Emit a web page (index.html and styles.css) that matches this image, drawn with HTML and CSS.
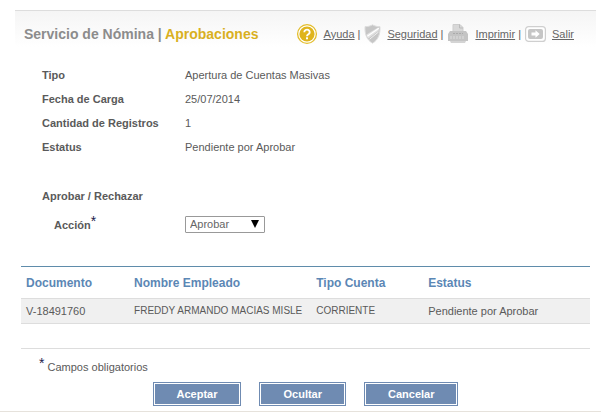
FILE: index.html
```html
<!DOCTYPE html>
<html lang="es">
<head>
    <meta charset="UTF-8">
    <title>Servicio de Nómina | Aprobaciones</title>
    <meta name="viewport" content="width=device-width, initial-scale=1">
    <link rel="stylesheet" href="styles.css">
</head>
<body>
    <div class="page">
        <div class="header">
            <h1>Servicio de Nómina | <span class="current">Aprobaciones</span></h1>
            <ul class="tools">
                <li class="tool">
                    <svg class="icon" width="22" height="22" viewBox="0 0 22 22">
                        <circle cx="11" cy="11" r="9.4" fill="#fff" stroke="#e3bd2c" stroke-width="1.3"/>
                        <circle cx="11" cy="11" r="7.6" fill="#dfb41c"/>
                        <path d="M8.3 9.2a2.7 2.5 0 1 1 4.2 2c-1 .7-1.5 1-1.5 2" fill="none" stroke="#fff" stroke-width="1.9"/>
                        <rect x="10" y="14.3" width="2" height="2" fill="#fff"/>
                    </svg>
                    <a href="#">Ayuda</a><span class="sep">|</span>
                </li>
                <li class="tool">
                    <svg class="icon" width="17" height="20" viewBox="0 0 17 20">
                        <path d="M8.5 0.8C6.5 2 4 2.8 1 2.6c-.3 7 1.3 13 7.5 16.6C14.7 15.6 16.3 9.6 16 2.6c-3 .2-5.500-.6-7.500-1.800z" fill="#c6c6c6" stroke="#dedede"/>
                        <path d="M2.5 10.5L14 3.6l1 .2-.4 3L4.3 14.5z" fill="#e2e2e2"/>
                        <path d="M3.3 12.3L14.8 4.2" stroke="#fff" stroke-width="1.200"/>
                        <path d="M5.5 15.3L14.5 8" stroke="#eee"/>
                    </svg>
                    <a href="#">Seguridad</a><span class="sep">|</span>
                </li>
                <li class="tool">
                    <svg class="icon" width="22" height="22" viewBox="0 0 22 22">
                        <path d="M6 9V1.5h7l3 3V9z" fill="#d8d8d8" stroke="#cdcdcd"/>
                        <path d="M12.5 1.5V5H16" fill="none" stroke="#bbb"/>
                        <path d="M3 8h16l2 3v7H1v-7z" fill="#c4c4c4"/>
                        <path d="M6 10.500h10" stroke="#aaa" stroke-dasharray="2 1"/>
                        <path d="M4 13v3M7 13v3M10 13v3M13 13v3M16 13v3" stroke="#dedede"/>
                        <path d="M3 18h16l-1 2H4z" fill="#d4d4d4"/>
                    </svg>
                    <a href="#">Imprimir</a><span class="sep">|</span>
                </li>
                <li class="tool">
                    <svg class="icon" width="21" height="16" viewBox="0 0 21 16">
                        <rect x="0.6" y="0.6" width="19.8" height="14.8" rx="3" fill="#fff" stroke="#cfcfcf" stroke-width="1.2"/>
                        <rect x="3" y="3" width="15" height="10" rx="2" fill="#c6c6c6"/>
                        <path d="M6.500 6.500h4V4.300L14.700 8l-4.200 3.700V9.500h-4z" fill="#fff"/>
                    </svg>
                    <a href="#">Salir</a>
                </li>
            </ul>
        </div>

        <form class="content">
            <dl class="details">
                <dt>Tipo</dt><dd>Apertura de Cuentas Masivas</dd>
                <dt>Fecha de Carga</dt><dd>25/07/2014</dd>
                <dt>Cantidad de Registros</dt><dd>1</dd>
                <dt>Estatus</dt><dd>Pendiente por Aprobar</dd>
            </dl>

            <h2>Aprobar / Rechazar</h2>
            <div class="field">
                <label for="accion">Acción<span class="required">*</span></label>
                <div class="select">
                    <select id="accion" name="accion">
                        <option>Aprobar</option>
                        <option>Rechazar</option>
                    </select>
                    <svg class="arrow" width="8" height="8" viewBox="0 0 8 8"><path d="M0 0h8L4 8z"/></svg>
                </div>
            </div>

            <table class="employees">
                <thead>
                    <tr>
                        <th class="col-doc">Documento</th>
                        <th class="col-name">Nombre Empleado</th>
                        <th class="col-type">Tipo Cuenta</th>
                        <th>Estatus</th>
                    </tr>
                </thead>
                <tbody>
                    <tr>
                        <td>V-18491760</td>
                        <td class="caps">FREDDY ARMANDO MACIAS MISLE</td>
                        <td class="caps">CORRIENTE</td>
                        <td>Pendiente por Aprobar</td>
                    </tr>
                </tbody>
            </table>

            <p class="note"><span class="required">*</span> Campos obligatorios</p>

            <div class="buttons">
                <button type="submit">Aceptar</button>
                <button type="button">Ocultar</button>
                <button type="button">Cancelar</button>
            </div>
        </form>
    </div>
</body>
</html>
```
FILE: styles.css
```css
:root {
    --text: #5a5a5a;
    --blue: #5b87b5;
    --button: #6f8bb2;
    --gold: #d9b01f;
    --line: #ddd;
}
body {
    margin: 0;
    background: #fff;
    color: var(--text);
    font-family: "Liberation Sans", Arial, sans-serif;
    font-size: 11px;
    line-height: 14px;
}
.page {
    padding-top: 10px;
    border-bottom: 1px solid #e6e2dc;
}
.header {
    display: flex;
    align-items: center;
    justify-content: space-between;
    height: 46px;
    margin: 0 5px 0 15px;
    padding: 0 22px 0 9px;
    border-top: 1px solid var(--line);
    background: linear-gradient(#f5f5f5, #fff 80%);
    box-sizing: border-box;
}
h1 {
    margin: 0;
    color: #8c8c8c;
    font-size: 14px;
    line-height: 20px;
    white-space: nowrap;
}
.current {
    color: var(--gold);
}
.tools {
    display: flex;
    gap: 4px;
    margin: 0;
    padding: 0;
    list-style: none;
}
.tool {
    display: flex;
    align-items: center;
    white-space: nowrap;
}
.icon {
    margin-right: 6px;
}
.tool a {
    color: #666;
}
.sep {
    margin-left: 3px;
}

.content {
    padding: 7px 11px 5px 21px;
}
.details {
    display: grid;
    grid-template-columns: 143px 1fr;
    margin: 0 0 30px 21px;
    line-height: 24px;
}
dt, label {
    font-weight: bold;
}
dd {
    margin: 0;
}
h2 {
    margin: 0 0 13px 21px;
    font-size: 11px;
    line-height: 14px;
}
.field {
    display: grid;
    grid-template-columns: 131px 1fr;
    align-items: center;
    margin-left: 33px;
}
.required {
    color: #1c1c4c;
    font-size: 14px;
    font-weight: normal;
    line-height: 0;
    vertical-align: 3px;
}
.select {
    position: relative;
    width: 80px;
}
select {
    display: block;
    width: 100%;
    height: 17px;
    padding: 0 4px;
    border: 1px solid #999;
    border-radius: 1px;
    background: #fff;
    color: #666;
    font: inherit;
    line-height: 15px;
    appearance: none;
}
.arrow {
    position: absolute;
    top: 4px;
    right: 6px;
    pointer-events: none;
}

.employees {
    width: 100%;
    margin-top: 33px;
    border-top: 1px solid #5f8cab;
    border-collapse: collapse;
    table-layout: fixed;
}
th, td {
    padding: 0 0 0 5px;
    text-align: left;
    white-space: nowrap;
}
th {
    height: 31px;
    color: var(--blue);
    font-size: 12px;
}
td {
    height: 24px;
    border-top: 1px solid var(--line);
    border-bottom: 1px solid var(--line);
    background: #f0f0f0;
}
.caps {
    font-size: 10px;
}
/* fixed layout: these widths include the 5px cell padding only with border-box */
.col-doc, .col-name, .col-type {
    box-sizing: border-box;
}
.col-doc { width: 19%; }
.col-name { width: 32%; }
.col-type { width: 112px; }

.note {
    margin: 24px 0 0;
    padding: 11px 0 0 18px;
    border-top: 1px solid var(--line);
}
.buttons {
    display: flex;
    justify-content: center;
    gap: 18px;
    margin-top: 8px;
}
button {
    height: 24px;
    padding: 0 23px;
    border: 1px solid var(--button);
    background: var(--button);
    box-shadow: inset 0 0 0 1px #fff;
    color: #fff;
    font: bold 11px "Liberation Sans", Arial, sans-serif;
    cursor: pointer;
}
```
